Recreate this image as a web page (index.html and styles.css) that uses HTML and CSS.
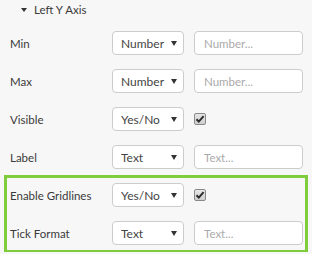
FILE: index.html
```html
<!DOCTYPE html>
<html lang="en">
<head>
    <meta charset="UTF-8">
    <meta name="viewport" content="width=device-width, initial-scale=1.0">
    <title>Left Y Axis</title>
    <link rel="stylesheet" href="styles.css">
</head>
<body>

    <!-- Section header -->
    <div class="section-head">
        <span class="caret"></span>
        <span>Left Y Axis</span>
    </div>

    <!-- Properties -->
    <div class="props">
        <div class="prop-row">
            <label>Min</label>
            <div class="select"><select><option>Number</option></select><span class="arrow"></span></div>
            <input type="text" placeholder="Number...">
        </div>
        <div class="prop-row">
            <label>Max</label>
            <div class="select"><select><option>Number</option></select><span class="arrow"></span></div>
            <input type="text" placeholder="Number...">
        </div>
        <div class="prop-row">
            <label>Visible</label>
            <div class="select"><select><option>Yes/No</option></select><span class="arrow"></span></div>
            <span class="check"><svg width="10" height="10" viewBox="0 0 10 10"><path d="M1.5 5.2 L3.8 7.6 L8.6 2.2" fill="none" stroke="#2b2b2b" stroke-width="2"/></svg></span>
        </div>
        <div class="prop-row">
            <label>Label</label>
            <div class="select"><select><option>Text</option></select><span class="arrow"></span></div>
            <input type="text" placeholder="Text...">
        </div>

        <!-- Highlighted group -->
        <div class="highlight">
            <div class="prop-row">
                <label>Enable Gridlines</label>
                <div class="select"><select><option>Yes/No</option></select><span class="arrow"></span></div>
                <span class="check"><svg width="10" height="10" viewBox="0 0 10 10"><path d="M1.5 5.2 L3.8 7.6 L8.6 2.2" fill="none" stroke="#2b2b2b" stroke-width="2"/></svg></span>
            </div>
            <div class="prop-row">
                <label>Tick Format</label>
                <div class="select"><select><option>Text</option></select><span class="arrow"></span></div>
                <input type="text" placeholder="Text...">
            </div>
        </div>
    </div>

</body>
</html>
```

FILE: styles.css
```css
body {
    font-family: Lato, "Open Sans", sans-serif;
    font-size: 11.5px;
    color: #3a3a3a;
    background-color: #f7f7f7;
    margin: 0;
    padding: 0;
}

.section-head {
    height: 19px;
    display: flex;
    align-items: center;
    padding-left: 21px;
    margin-bottom: 5px;
    gap: 7px;
}

.caret {
    width: 0;
    height: 0;
    border-left: 3px solid transparent;
    border-right: 3px solid transparent;
    border-top: 4px solid #333;
}

.prop-row {
    height: 38px;
    display: grid;
    grid-template-columns: 92px 72px 109px;
    column-gap: 10px;
    align-items: center;
    padding-left: 10px;
}

.select {
    position: relative;
    height: 24px;
}

.select select {
    appearance: none;
    -webkit-appearance: none;
    width: 100%;
    height: 100%;
    border: 1px solid #ccc;
    border-radius: 4px;
    background-color: #fff;
    font-family: inherit;
    font-size: 12px;
    color: #444;
    padding: 0 0 0 8px;
    outline: none;
}

.select .arrow {
    position: absolute;
    right: 7px;
    top: 10px;
    width: 0;
    height: 0;
    border-left: 3px solid transparent;
    border-right: 3px solid transparent;
    border-top: 5px solid #333;
    pointer-events: none;
}

.prop-row input {
    height: 24px;
    box-sizing: border-box;
    border: 1px solid #ccc;
    border-radius: 4px;
    background-color: #fff;
    font-family: inherit;
    font-size: 11.5px;
    padding: 0 9px;
    outline: none;
}

.prop-row input::placeholder {
    color: #aaa;
}

.check {
    width: 12px;
    height: 12px;
    box-sizing: border-box;
    border: 1px solid #8a8a8a;
    border-radius: 2px;
    background: linear-gradient(#e6e6e6, #cfcfcf);
    display: flex;
    align-items: center;
    justify-content: center;
}

.highlight {
    margin: 0 5px;
    outline: 3px solid #7fcc3c;
    outline-offset: -2px;
}

.highlight .prop-row {
    padding-left: 5px;
}
```
